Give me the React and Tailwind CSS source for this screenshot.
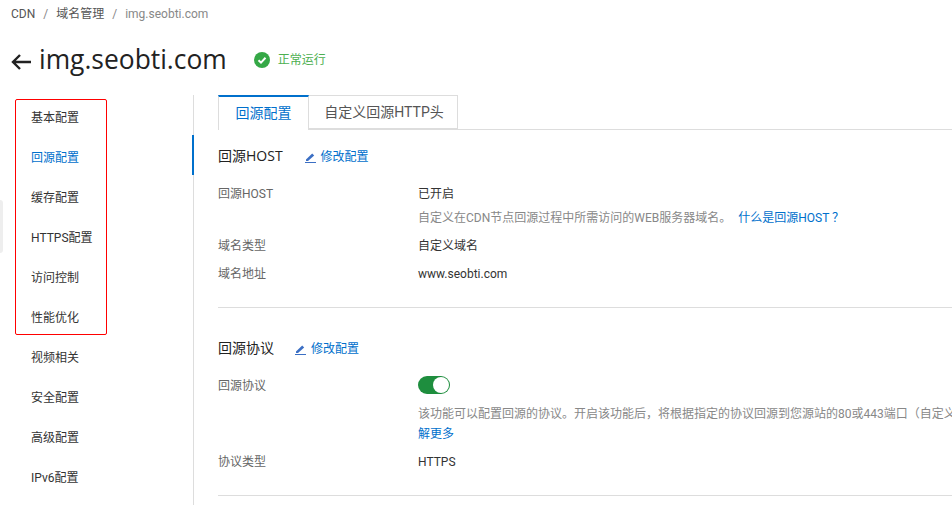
import React from 'react';

const menu = ['基本配置', '回源配置', '缓存配置', 'HTTPS配置', '访问控制', '性能优化', '视频相关', '安全配置', '高级配置', 'IPv6配置'];

const EditLink = ({ className = '' }) => (
  <a className={`mt-[2px] flex items-center gap-[5px] text-xs text-[#0070cc] ${className}`}>
    <svg width="11" height="11" viewBox="0 0 11 11" className="text-[#3b6fc4]">
      <path d="M1 7.6 L7.2 1.4 L9.2 3.4 L3 9 L1 9 Z" fill="currentColor" />
      <rect x="0" y="10" width="11" height="1" fill="currentColor" />
    </svg>
    修改配置
  </a>
);

const Row = ({ label, children, className = '' }) => (
  <div className={`flex text-xs leading-5 ${className}`}>
    <div className="w-[200px] shrink-0 text-[#666]">{label}</div>
    <div className="min-w-0 text-[#333]">{children}</div>
  </div>
);

const App = () => {
  return (
    <div className="relative h-[505px] w-[952px] overflow-hidden bg-white font-['Roboto','Noto_Sans_CJK_SC',sans-serif]">
      <nav className="flex h-[28px] items-center gap-[8px] pl-[11px] text-xs text-[#555]">
        <span>CDN</span>
        <span className="text-[#888]">/</span>
        <span>域名管理</span>
        <span className="text-[#888]">/</span>
        <span className="text-[#888]">img.seobti.com</span>
      </nav>

      <header className="mt-[12px] flex h-[40px] items-center pl-[11px]">
        <svg width="21" height="16" viewBox="0 0 21 16" className="mt-[4px] text-[#222]">
          <path d="M9 1 L2 8 L9 15 M2 8 H20" fill="none" stroke="currentColor" strokeWidth="2.4" />
        </svg>
        <h1 className="ml-[7px] font-['Open_Sans',sans-serif] text-[26.4px] text-[#222]">img.seobti.com</h1>
        <svg width="16" height="16" viewBox="0 0 16 16" className="ml-[27px]">
          <circle cx="8" cy="8" r="8" fill="#35a846" />
          <path d="M4.5 8.2 L7 10.6 L11.5 5.8" fill="none" stroke="#fff" strokeWidth="2" />
        </svg>
        <span className="ml-[8px] text-xs text-[#4caf50]">正常运行</span>
      </header>

      <div className="mt-[15px] flex">
        <aside className="h-[410px] w-[194px] shrink-0 border-r border-[#ddd] pt-[2px]">
          {menu.map((item, i) => (
            <div
              key={item}
              className={`relative flex h-[40px] items-center pl-[31px] text-xs ${i === 0 ? 'mt-[1px]' : ''} ${
                item === '回源配置' ? 'text-[#0070cc]' : 'text-[#333]'
              }`}
            >
              {item}
              {item === '回源配置' && <span className="absolute right-[-1px] top-[-3px] h-[40px] w-[2px] bg-[#0070cc]" />}
            </div>
          ))}
        </aside>

        <main className="min-w-0 flex-1 pl-[24px]">
          <div className="flex h-[35px] border-b border-[#ddd]">
            <div className="flex h-[35px] w-[91px] items-center justify-center border-x border-[#ddd] border-t-2 border-t-[#0070cc] bg-white pb-[2px] text-sm text-[#0070cc]">
              回源配置
            </div>
            <div className="flex h-[34px] w-[149px] items-center justify-center border-y border-r border-[#ddd] pl-[2px] text-sm text-[#555]">
              自定义回源HTTP头
            </div>
          </div>

          <section className="border-b border-[#ddd] pb-[23px] pt-[15px]">
            <div className="flex h-[22px] items-center">
              <h2 className="font-['Open_Sans','Noto_Sans_CJK_SC',sans-serif] text-sm text-[#222]">回源HOST</h2>
              <EditLink className="ml-[22px]" />
            </div>
            <Row label="回源HOST" className="mt-[17px]">已开启</Row>
            <div className="mt-[4px] whitespace-nowrap pl-[200px] text-xs leading-5 text-[#888]">
              自定义在CDN节点回源过程中所需访问的WEB服务器域名。
              <a className="ml-[7px] text-[#0070cc]">什么是回源HOST ？</a>
            </div>
            <Row label="域名类型" className="mt-[8px]">自定义域名</Row>
            <Row label="域名地址" className="mt-[8px]">www.seobti.com</Row>
          </section>

          <section className="border-b border-[#ddd] pb-[23px] pt-[29px]">
            <div className="flex h-[22px] items-center">
              <h2 className="text-sm text-[#222]">回源协议</h2>
              <EditLink className="ml-[21px]" />
            </div>
            <Row label="回源协议" className="mt-[17px]">
              <span className="flex h-[18px] w-[32px] items-center justify-end rounded-full bg-[#1e8e3e] pr-[1px]">
                <span className="h-[16px] w-[16px] rounded-full bg-white" />
              </span>
            </Row>
            <div className="mt-[8px] pl-[200px] text-xs leading-5">
              <p className="whitespace-nowrap text-[#888]">
                该功能可以配置回源的协议。开启该功能后，将根据指定的协议回源到您源站的80或443端口（自定义端口
              </p>
              <a className="text-[#0070cc]">解更多</a>
            </div>
            <Row label="协议类型" className="mt-[8px]">HTTPS</Row>
          </section>
        </main>
      </div>

      {/* annotation drawn over the screenshot */}
      <div className="absolute left-[15px] top-[99px] h-[236px] w-[92px] rounded-[2px] border border-[#f00]" />
      <div className="absolute left-0 top-[200px] h-[53px] w-[3px] rounded-r bg-[#eee]" />
    </div>
  );
};

export default App;
